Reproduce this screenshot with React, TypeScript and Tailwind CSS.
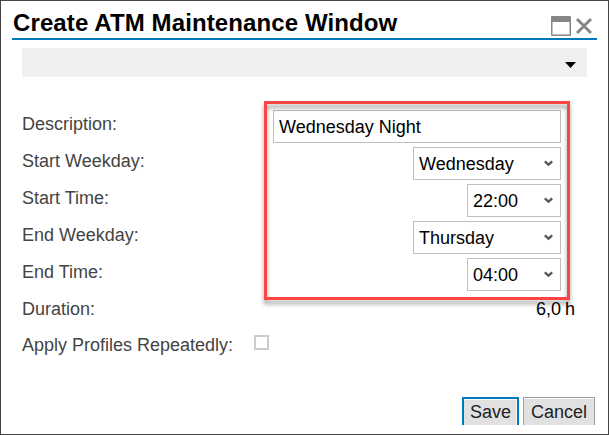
import React from "react";

const labelClass = "whitespace-nowrap text-[18px] leading-5 text-[#444444]";

function Chevron() {
  return (
    <svg width="9" height="7" viewBox="0 0 9 7" className="shrink-0">
      <path d="M0.8 1.3 L4.5 4.7 L8.2 1.3" fill="none" stroke="#595959" strokeWidth="2.3" />
    </svg>
  );
}

function Select({ value, wide }: { value: string; wide?: boolean }) {
  return (
    <button
      type="button"
      className={`${wide ? "w-[148px]" : "w-[94px]"} flex h-[33px] items-center justify-between border border-[#bfbfbf] bg-white pr-[7px] pl-[5px] text-[18px] leading-5 text-black`}
    >
      <span>{value}</span>
      <Chevron />
    </button>
  );
}

function Row({ label, children }: { label: string; children: React.ReactNode }) {
  return (
    <div className="flex h-[37px] justify-between pt-0.5">
      <span className={`${labelClass} pt-1`}>{label}</span>
      {children}
    </div>
  );
}

export default function App() {
  return (
    <div className="relative flex h-[435px] w-[609px] flex-col overflow-hidden border border-[#444444] bg-white font-['Liberation_Sans',Arial,sans-serif]">
      <header className="mr-[11px] ml-[11px] flex h-[39px] items-start justify-between border-b-2 border-[#0079bf] pl-px">
        <h1 className="pt-2 text-[24px] leading-7 font-bold tracking-[0.11px] whitespace-nowrap text-black">Create ATM Maintenance Window</h1>
        <div className="flex gap-[5px] pt-[15px] pr-[5px]">
          <svg width="20" height="20" viewBox="0 0 20 20">
            <path d="M0 1Q0 0 1 0H19Q20 0 20 1V19Q20 20 19 20H1Q0 20 0 19ZM1.5 6V18.5H18.5V6Z" fill="#868686" fillRule="evenodd" />
          </svg>
          <svg width="16" height="20" viewBox="0 0 16 20">
            <path d="M1 3L15 17M15 3L1 17" stroke="#868686" strokeWidth="3" />
          </svg>
        </div>
      </header>
      <div className="mt-2 mr-[21px] ml-[21px] flex h-[29px] shrink-0 items-center justify-end bg-[#f0f0f0] pt-1 pr-[11px]">
        <svg width="11" height="6" viewBox="0 0 11 6">
          <path d="M0 0H11L5.5 6Z" fill="black" />
        </svg>
      </div>
      <main className="mt-[31px] mr-[47px] ml-[21px] flex flex-col">
        <Row label="Description:">
          <input
            className="h-[33px] w-[288px] border border-[#bfbfbf] bg-white px-[5px] pt-[2px] text-[18px] text-black outline-none"
            defaultValue="Wednesday Night"
          />
        </Row>
        <Row label="Start Weekday:"><Select value="Wednesday" wide /></Row>
        <Row label="Start Time:"><Select value="22:00" /></Row>
        <Row label="End Weekday:"><Select value="Thursday" wide /></Row>
        <Row label="End Time:"><Select value="04:00" /></Row>
        <div className="-mr-[14px]">
          <Row label="Duration:"><span className="pt-1 text-[18px] leading-5 text-black [word-spacing:-1px]">6,0 h</span></Row>
        </div>
        <div className="flex h-[37px] gap-[21px] pt-[5px]">
          <span className={labelClass}>Apply Profiles Repeatedly:</span>
          <span className="size-[15px] border-2 border-[#cccccc] bg-white" />
        </div>
      </main>
      <footer className="mt-auto mr-[13px] mb-[9px] flex h-7 shrink-0 justify-end gap-1">
        <button type="button" className="w-[57px] border-2 border-b-0 border-[#0079bf] bg-[#e1e1e1] text-[18px] leading-[26px] text-[#222222] shadow-[inset_-1px_1px_0_#f8f8f8]">Save</button>
        <button type="button" className="w-[72px] border border-b-0 border-[#a0a0a0] bg-[#e1e1e1] text-[18px] leading-7 text-[#222222] shadow-[inset_0_1px_0_#f8f8f8]">Cancel</button>
      </footer>
      <div className="pointer-events-none absolute top-[100px] left-[263px] h-[199px] w-[306px] border-3 border-[#ff4444] drop-shadow-[0_4px_2px_rgba(0,0,0,0.38)]" />
    </div>
  );
}
